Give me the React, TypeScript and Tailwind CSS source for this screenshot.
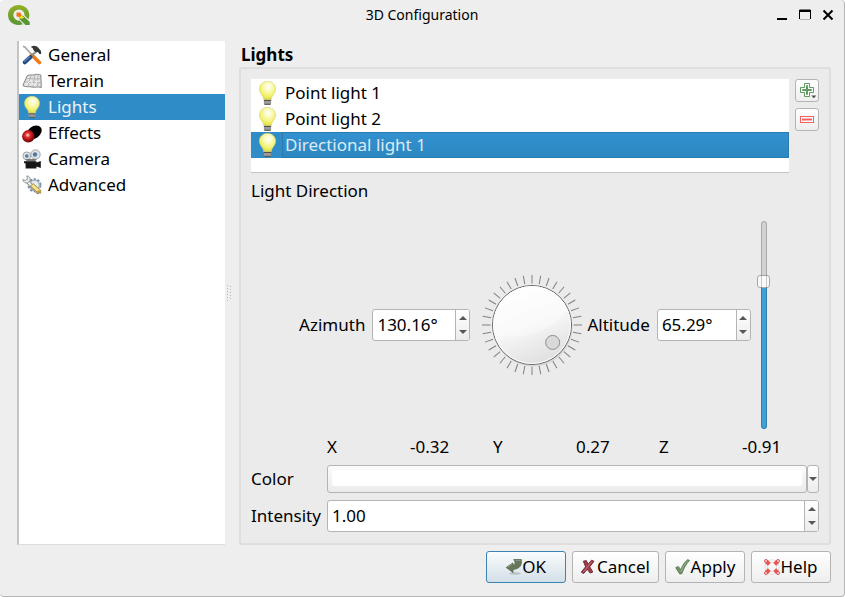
import { useState } from "react";
import type { ReactNode } from "react";

type Light = { name: string };

const lights: Light[] = [
  { name: "Point light 1" },
  { name: "Point light 2" },
  { name: "Directional light 1" },
];

function QgisLogo() {
  return (
    <svg className="h-5 w-[22px]" viewBox="0 0 22 20" aria-hidden="true">
      <defs>
        <linearGradient id="logo" x1="0" y1="0" x2="0" y2="1">
          <stop offset="0" stopColor="#93b023" />
          <stop offset="1" stopColor="#589632" />
        </linearGradient>
      </defs>
      <path fill="url(#logo)" fillRule="evenodd" d="M10.5 0C4.700 0 0 4.300 0 10s4.600 10 10.600 10c1.700 0 3.100-.3 4.300-.8L11.600 15.600a5.600 5.600 0 1 1 4.900-5L20.400 14.200c.6-1.300.9-2.700.9-4.200C21.300 4.300 16.500 0 10.500 0Z" />
      <path fill="#589632" d="M11.500 10.800 15.200 10.800 21.700 17v3H17.500L11.500 14.200Z" />
      <path fill="#f1e31c" d="M10.500 9.500 13.300 9.900 16.300 12.800 13 14 10.600 11.800Z" />
      <path fill="#ee7913" d="M8.500 7.600h3.800L13.800 10.600 11.600 12 8.500 11.400Z" />
    </svg>
  );
}

function Bulb({ className }: { className: string }) {
  return (
    <svg className={className} viewBox="0 0 17 24" aria-hidden="true">
      <defs>
        <radialGradient id="bulb" cx="0.55" cy="0.3" r="0.7">
          <stop offset="0" stopColor="#ffffff" />
          <stop offset="0.3" stopColor="#fbfbc4" />
          <stop offset="0.75" stopColor="#f0ef62" />
          <stop offset="1" stopColor="#d6d448" />
        </radialGradient>
      </defs>
      <path d="M8.500.4C3.800.4.400 3.800.400 8c0 3.500 2.300 5.400 3.400 7.400.6 1.100.9 2 1.100 3.600h7.200c.2-1.600.5-2.500 1.100-3.600 1.100-2 3.400-3.900 3.400-7.400C16.600 3.800 13.200.4 8.500.4Z" fill="url(#bulb)" stroke="#d9d878" strokeWidth="0.7" />
      <path d="M4.900 18.800h7.200v3.400l-1 1.500H5.900l-1-1.500Z" fill="#9a9a9a" />
      <path d="M4.900 19.500h7.200M5.300 23.300h6.400" stroke="#4a4a4a" strokeWidth="0.9" />
    </svg>
  );
}

function ToolsIcon() {
  return (
    <svg className="size-5" viewBox="0 0 20 20" aria-hidden="true">
      <path d="M1 1.200 3 2.200l7.500 8.300" fill="none" stroke="#a5aaa6" strokeWidth="1.700" />
      <path d="M9.800 10 17.400 17.500" stroke="#ed7d16" strokeWidth="3.800" strokeLinecap="round" />
      <path d="M15.200 5.500 8 12.300" stroke="#8c918d" strokeWidth="2.200" />
      <path d="M8.500 12 2.800 17.300" stroke="#204a87" strokeWidth="4" strokeLinecap="round" />
      <path d="M8 11.500 2.200 16.700" stroke="#5b86c4" strokeWidth="1.200" />
      <path d="M9.300 1.500C12 .2 14.800.9 16.500 3.100L19 6l.2 2.900-1.800.2-1.500-2.200-2 .3L11.300 5C11.200 3.500 10.400 2.800 9.300 2.500Z" fill="#353a38" />
    </svg>
  );
}

function TerrainIcon() {
  return (
    <svg className="size-5" viewBox="0 0 20 20" aria-hidden="true">
      <path d="M5.300 4.600C8 3.200 10 4.600 12.500 3.700 15 3 16.500 3.300 18.800 4L19.300 16.500C16 15.200 13 16.800 10 16 7 15.200 4 16.500.8 14.500Z" fill="#e2e2e2" stroke="#858585" strokeWidth="1" />
      <path d="M3.800 8C7 6.500 12 9 19 7.600M2.300 11.300C6 9.800 12 12.900 19.200 11.600M9 4.200 5.800 15.700M12.800 3.800 10.900 16.100M16 3.500 15.700 15.700" fill="none" stroke="#b2b2b2" strokeWidth="0.900" />
      <path d="M4 14 8.500 9.500 12 14 16.500 9.500" fill="none" stroke="#fafafa" strokeWidth="0.900" />
    </svg>
  );
}

function EffectsIcon() {
  return (
    <svg className="size-5" viewBox="0 0 20 20" aria-hidden="true">
      <defs>
        <radialGradient id="ball" cx="0.45" cy="0.4" r="0.6">
          <stop offset="0" stopColor="#ffdada" />
          <stop offset="0.35" stopColor="#e02a2a" />
          <stop offset="1" stopColor="#6d0000" />
        </radialGradient>
      </defs>
      <ellipse cx="12" cy="9.500" rx="8.500" ry="6" transform="rotate(-37 12 9.500)" fill="#000" />
      <circle cx="6.300" cy="13.300" r="6.200" fill="url(#ball)" />
    </svg>
  );
}

function CameraIcon() {
  return (
    <svg className="size-5" viewBox="0 0 20 20" aria-hidden="true">
      <circle cx="4.800" cy="6.800" r="3.900" fill="#dfe3e6" stroke="#a0a4a8" />
      <circle cx="13.500" cy="5.500" r="4.700" fill="#dfe3e6" stroke="#a0a4a8" />
      <circle cx="4.800" cy="7" r="1.800" fill="#527ba4" />
      <circle cx="13" cy="5.500" r="2.200" fill="#527ba4" />
      <path d="M3.500 10h11L13.200 12.500H4.700Z" fill="#777" />
      <path d="M2 12.300h12.500v1.300l4.300-1.700v7.200l-4.300-1.500v1.900H3.600v-5L2 14Z" fill="#161616" />
    </svg>
  );
}

function AdvancedIcon() {
  return (
    <svg className="size-5" viewBox="0 0 20 20" aria-hidden="true">
      <circle cx="12.500" cy="10.200" r="6" fill="#d4dde7" stroke="#7d93aa" strokeWidth="2" strokeDasharray="2.400 1.400" />
      <circle cx="12.500" cy="10.200" r="4.800" fill="#e7ecf1" stroke="#8fa2b6" strokeWidth="0.800" />
      <path d="M5.500 6.500 15.800 17.200" stroke="#777b7e" strokeWidth="3.800" strokeLinecap="round" />
      <path d="M5.500 6.500 15.600 17" stroke="#f3f3f3" strokeWidth="2.400" strokeLinecap="round" />
      <path d="M4.500 1C7 .6 8.800 2.800 8 5.300L6 7.800C3.500 8.700 1 7 .8 4.500L3 5.500 5.300 4.300 5.300 2Z" fill="#eeeeee" stroke="#8c8f91" strokeWidth="0.900" />
      <path d="m8.300 11 3-2.300 7.300 6.300.2 2.800-3.300-.4Z" fill="#f3df86" stroke="#927b2c" strokeWidth="0.800" />
      <path d="m17.200 14.900 1.900 3.800-4.200-1.700Z" fill="#ba9434" />
    </svg>
  );
}

function AddIcon() {
  return (
    <svg className="h-[18px] w-5" viewBox="0 0 20 18" aria-hidden="true">
      <path d="M7.500 1.500h5v4h4v5h-4v4h-5v-4h-4v-5h4Z" fill="#fff" stroke="#5f9a61" strokeWidth="1" strokeLinejoin="round" />
      <path d="M10 3.300v9.400M5.300 8h9.400" stroke="#5f9a61" strokeWidth="2" />
      <path d="M14.300 13.500h5l-2.500 2.800Z" fill="#4c4c4c" />
    </svg>
  );
}

function RemoveIcon() {
  return (
    <svg className="h-[18px] w-5" viewBox="0 0 20 18" aria-hidden="true">
      <rect x="3.500" y="5.500" width="13" height="6" fill="#fff" stroke="#f2605f" strokeWidth="1" />
      <path d="M5 8.500h10" stroke="#f2605f" strokeWidth="2" />
    </svg>
  );
}

function OkIcon() {
  return (
    <svg className="size-4" viewBox="0 0 16 16" aria-hidden="true">
      <ellipse cx="9" cy="14.500" rx="6" ry="1.200" fill="#b6bcbf" />
      <path d="M8.800 2.500C8.300 1.500 7.800 1 7.800.5h7.500C15.800 6 14.800 9.500 7 10.500v3L.2 8.500 7 3.900V6.300C9 6 9.500 4.500 8.800 2.500Z" fill="#65785a" stroke="#4c5d43" strokeWidth="0.700" />
      <path d="M9.500 1.400h5M1.500 8.400 6.300 5.200" stroke="#94a389" strokeWidth="0.800" />
    </svg>
  );
}

function CancelIcon() {
  return (
    <svg className="size-4" viewBox="0 0 16 16" aria-hidden="true">
      <path d="M2.300 2.200 5.300 1.600 7.200 5.200 10.500 1.200 13 2.300 8.700 7.800 11.800 13 9 14 6.300 10.200 2.600 14.500.3 13.200 4.600 7.800Z" fill="#a43c49" stroke="#62222b" strokeWidth="0.900" />
      <path d="m2.200 13 8.500-10.300" stroke="#cc7a84" strokeWidth="0.900" />
    </svg>
  );
}

function ApplyIcon() {
  return (
    <svg className="size-4" viewBox="0 0 16 16" aria-hidden="true">
      <path d="M.7 8.700 3.300 7.500 5.700 10.700C7.700 6.200 9.800 2.800 12.800.6L14.500 1.500C11 5 8.800 9.300 6.800 14.700L4.800 15Z" fill="#739467" stroke="#4f6e45" strokeWidth="0.800" />
      <path d="M6 12.500C8 7.600 10.300 4 13 1.500" fill="none" stroke="#a9c19f" strokeWidth="0.700" />
    </svg>
  );
}

function HelpIcon() {
  return (
    <svg className="size-4" viewBox="0 0 16 16" aria-hidden="true">
      <circle cx="8" cy="8" r="6" fill="none" stroke="#d2d2d2" strokeWidth="3" />
      <circle cx="8" cy="8" r="6" fill="none" stroke="#f5f5f5" strokeWidth="1.800" />
      <path d="M2.500 2.500 5.300 5.300M13.500 2.500 10.700 5.300M2.500 13.500 5.300 10.700M13.500 13.500 10.700 10.700" stroke="#ef5350" strokeWidth="4" />
      <g fill="#fbdada" stroke="#d94343" strokeWidth="0.900">
        <circle cx="2" cy="2" r="1.500" />
        <circle cx="14" cy="2" r="1.500" />
        <circle cx="2" cy="14" r="1.500" />
        <circle cx="14" cy="14" r="1.500" />
      </g>
    </svg>
  );
}

const pages: { name: string; icon: ReactNode }[] = [
  { name: "General", icon: <ToolsIcon /> },
  { name: "Terrain", icon: <TerrainIcon /> },
  { name: "Lights", icon: <Bulb className="h-[22px] w-5" /> },
  { name: "Effects", icon: <EffectsIcon /> },
  { name: "Camera", icon: <CameraIcon /> },
  { name: "Advanced", icon: <AdvancedIcon /> },
];

function Arrow({ up = false }: { up?: boolean }) {
  return (
    <svg className="h-1 w-2" viewBox="0 0 8 4" aria-hidden="true">
      <path d={up ? "M0 4h8L4 0Z" : "M0 0h8L4 4Z"} fill="#575757" />
    </svg>
  );
}

function TitleBar() {
  return (
    <header className="grid h-[30px] grid-cols-3 items-center px-2">
      <QgisLogo />
      <h1 className="text-center text-sm">3D Configuration</h1>
      <div className="flex justify-end gap-[11px] pr-0.5">
        <button aria-label="Minimize">
          <svg className="size-3" viewBox="0 0 12 12"><path d="M1 10h10" stroke="#000" strokeWidth="2" /></svg>
        </button>
        <button aria-label="Maximize">
          <svg className="size-3" viewBox="0 0 12 12">
            <path d="M.5 10V1h11v9" fill="none" stroke="#000" />
            <path d="M0 2h12" stroke="#000" strokeWidth="2" />
            <path d="M1 10.500h10" stroke="#b5b5b5" />
          </svg>
        </button>
        <button aria-label="Close">
          <svg className="size-3" viewBox="0 0 12 12"><path d="m1.500 1.500 9 9m0-9-9 9" stroke="#000" strokeWidth="2" /></svg>
        </button>
      </div>
    </header>
  );
}

function SpinBox({ id, value, onChange, step, suffix = "", className }: {
  id: string;
  value: number;
  onChange: (value: number) => void;
  step: number;
  suffix?: string;
  className: string;
}) {
  return (
    <div className={`flex h-8 rounded-[3px] border border-[#b4b4b4] bg-white ${className}`}>
      <input
        id={id}
        value={value.toFixed(2) + suffix}
        onChange={(e) => onChange(parseFloat(e.target.value) || 0)}
        className="min-w-0 flex-1 bg-transparent pl-1 outline-none"
      />
      <div className="flex w-3.5 flex-col rounded-r-[2px] border-l border-[#b4b4b4] bg-linear-to-b from-white to-[#ececec] py-px">
        <button aria-label="Increase" onClick={() => onChange(value + step)} className="flex flex-1 items-center justify-center">
          <Arrow up />
        </button>
        <button aria-label="Decrease" onClick={() => onChange(value - step)} className="flex flex-1 items-center justify-center">
          <Arrow />
        </button>
      </div>
    </div>
  );
}

const ticks = Array.from({ length: 36 }, (_, i) => i * 10);

function Dial({ value, onChange }: { value: number; onChange: (value: number) => void }) {
  const angle = (value * Math.PI) / 180;
  const x = 51 + 27 * Math.sin(angle);
  const y = 51 - 27 * Math.cos(angle);

  return (
    <div className="relative shrink-0">
      <svg className="size-[102px]" viewBox="0 0 102 102" aria-hidden="true">
        <defs>
          <linearGradient id="dial" x1="0.3" y1="0" x2="0.7" y2="1">
            <stop offset="0" stopColor="#ffffff" />
            <stop offset="0.5" stopColor="#f6f6f6" />
            <stop offset="1" stopColor="#dedede" />
          </linearGradient>
          <clipPath id="face"><circle cx="51" cy="51" r="38" /></clipPath>
        </defs>
        {ticks.map((tick) => (
          <path key={tick} d="M51 1v8.500" stroke="#808080" transform={`rotate(${tick} 51 51)`} />
        ))}
        <circle cx="52" cy="53" r="39.500" fill="#d8d8d8" />
        <circle cx="51" cy="51" r="39.500" fill="url(#dial)" stroke="#666666" />
        <path clipPath="url(#face)" d="M10 60C40 68 78 58 90 28L70 5H10Z" fill="#ffffff" opacity="0.350" />
        <circle cx="51" cy="51" r="38.500" fill="none" stroke="#ffffff" />
        <circle cx={x} cy={y} r="7" fill="#d9d9d9" stroke="#8f8f8f" />
      </svg>
      <input
        type="range"
        aria-label="Azimuth dial"
        min={0}
        max={360}
        step={0.01}
        value={value}
        onChange={(e) => onChange(Number(e.target.value))}
        className="absolute inset-0 size-full opacity-0"
      />
    </div>
  );
}

function AltitudeSlider({ value, onChange }: { value: number; onChange: (value: number) => void }) {
  const filled = (value / 90) * 100;

  return (
    <input
      type="range"
      aria-label="Altitude slider"
      min={0}
      max={90}
      step={0.01}
      value={value}
      onChange={(e) => onChange(Number(e.target.value))}
      style={{ backgroundImage: `linear-gradient(to top, #3f9fd8 ${filled}%, #d2d2d2 ${filled}%)` }}
      className="mr-1 ml-1.5 h-[208px] w-1.5 appearance-none rounded-sm outline outline-1 -outline-offset-1 outline-black/20 [direction:rtl] [writing-mode:vertical-lr] [&::-webkit-slider-thumb]:size-[13px] [&::-webkit-slider-thumb]:appearance-none [&::-webkit-slider-thumb]:rounded-[3px] [&::-webkit-slider-thumb]:border [&::-webkit-slider-thumb]:border-[#a8a8a8] [&::-webkit-slider-thumb]:bg-[#fafafa]"
    />
  );
}

function LightList({ selected, onSelect }: { selected: string; onSelect: (name: string) => void }) {
  return (
    <div className="flex gap-1.5">
      <ul className="h-[94px] flex-1 border-b border-[#c4c4c4] bg-white pt-px">
        {lights.map((light) => (
          <li key={light.name}>
            <button
              onClick={() => onSelect(light.name)}
              className={`flex h-[26px] w-full items-center text-left ${light.name === selected ? "bg-[#308cc6] text-[#dceaf5]" : ""}`}
            >
              <span className="flex w-[31px] justify-center pl-0.5"><Bulb className="h-6 w-[17px]" /></span>
              <span className={`flex h-full flex-1 items-center border pl-0.5 ${light.name === selected ? "border-[#2a7cb0] bg-linear-to-b from-[#3391cf] to-[#2d88c1]" : "border-transparent"}`}>
                {light.name}
              </span>
            </button>
          </li>
        ))}
      </ul>
      <div className="flex w-6 flex-col gap-1.5">
        <button aria-label="Add light" className="flex h-[23px] items-center justify-center rounded-[3px] border border-[#b4b4b4] bg-linear-to-b from-white to-[#eeeeee]">
          <AddIcon />
        </button>
        <button aria-label="Remove light" className="flex h-[23px] items-center justify-center rounded-[3px] border border-[#b4b4b4] bg-linear-to-b from-white to-[#eeeeee]">
          <RemoveIcon />
        </button>
      </div>
    </div>
  );
}

function DialogButton({ label, icon, primary = false }: { label: string; icon: ReactNode; primary?: boolean }) {
  return (
    <button
      className={`flex h-8 min-w-20 items-center justify-center rounded-[3px] border bg-linear-to-b px-2 ${
        primary ? "border-[#3b83b1] from-[#fafcfd] to-[#d3dfe7]" : "border-[#b4b4b4] from-white to-[#eeeeee]"
      }`}
    >
      {icon}
      {label}
    </button>
  );
}

export default function App() {
  const [page, setPage] = useState("Lights");
  const [light, setLight] = useState("Directional light 1");
  const [azimuth, setAzimuth] = useState(130.16);
  const [altitude, setAltitude] = useState(65.29);
  const [intensity, setIntensity] = useState(1);

  const az = (azimuth * Math.PI) / 180;
  const alt = (altitude * Math.PI) / 180;
  const direction = [
    { axis: "X", value: -Math.cos(alt) * Math.sin(az) },
    { axis: "Y", value: -Math.cos(alt) * Math.cos(az) },
    { axis: "Z", value: -Math.sin(alt) },
  ];

  return (
    <div className="flex min-h-screen flex-col rounded-[4px] border-r border-b border-[#b5b5b5] bg-[#eeeeee] font-['Noto_Sans',sans-serif] text-[17px] leading-6 text-black">
      <TitleBar />

      <main className="flex flex-1 pt-[11px] pr-[13px] pl-[17px]">
        <nav className="w-[208px] border-b border-l-2 border-b-[#dcdcdc] border-l-[#c4c4c4] bg-white pt-px">
          {pages.map((item) => (
            <button
              key={item.name}
              onClick={() => setPage(item.name)}
              className={`flex h-[26px] w-full items-center gap-1.5 pl-[3px] text-left ${item.name === page ? "bg-[#308cc6] text-[#eaf3fa]" : ""}`}
            >
              {item.icon}
              {item.name}
            </button>
          ))}
        </nav>

        <div className="flex w-3.5 items-center pl-0.5">
          <svg className="h-4 w-1" viewBox="0 0 4 16" aria-hidden="true">
            <path d="M.5 0v16M3.500 1v15" stroke="#b8b8b8" strokeDasharray="1 2" />
          </svg>
        </div>

        <section className="flex flex-1 flex-col">
          <h2 className="h-[26px] pt-0.5 pl-0.5 font-bold">Lights</h2>

          <div className="flex flex-1 flex-col rounded-[3px] border-2 border-[#dedede] bg-[#ebebeb] p-2.5">
            <LightList selected={light} onSelect={setLight} />
            <h3 className="mt-1.5">Light Direction</h3>

            <div className="flex flex-1 items-center justify-center pt-3">
              <label htmlFor="azimuth">Azimuth</label>
              <SpinBox id="azimuth" value={azimuth} onChange={setAzimuth} step={1} suffix="°" className="mr-[11px] ml-[7px] w-[98px]" />
              <Dial value={azimuth} onChange={setAzimuth} />
              <label htmlFor="altitude" className="ml-1">Altitude</label>
              <SpinBox id="altitude" value={altitude} onChange={setAltitude} step={1} suffix="°" className="mr-1 ml-[7px] w-[94px]" />
              <AltitudeSlider value={altitude} onChange={setAltitude} />
            </div>

            <div className="grid grid-cols-[70px_1fr] items-center gap-x-1.5 pb-px">
              <dl className="col-start-2 mb-1.5 grid grid-cols-6 gap-x-1.5">
                {direction.map(({ axis, value }) => [
                  <dt key={axis}>{axis}</dt>,
                  <dd key={axis + "-value"}>{value.toFixed(2)}</dd>,
                ])}
              </dl>

              <span id="color-label">Color</span>
              <div className="flex h-7">
                <button aria-labelledby="color-label" className="flex-1 rounded-[3px] border border-[#b4b4b4] bg-linear-to-b from-[#fbfbfb] to-[#ebebeb] px-1 pt-1 pb-1.5">
                  <span className="block h-4 rounded-[3px] bg-white" />
                </button>
                <button aria-label="Color menu" className="flex w-3 items-center justify-center rounded-[3px] border border-[#b4b4b4] bg-linear-to-b from-white to-[#ececec]">
                  <Arrow />
                </button>
              </div>

              <label htmlFor="intensity" className="mt-[7px]">Intensity</label>
              <SpinBox id="intensity" value={intensity} onChange={setIntensity} step={0.1} className="mt-[7px]" />
            </div>
          </div>
        </section>
      </main>

      <footer className="flex justify-end gap-1.5 pt-1.5 pr-[13px] pb-[13px]">
        <DialogButton label="OK" icon={<OkIcon />} primary />
        <DialogButton label="Cancel" icon={<CancelIcon />} />
        <DialogButton label="Apply" icon={<ApplyIcon />} />
        <DialogButton label="Help" icon={<HelpIcon />} />
      </footer>
    </div>
  );
}
